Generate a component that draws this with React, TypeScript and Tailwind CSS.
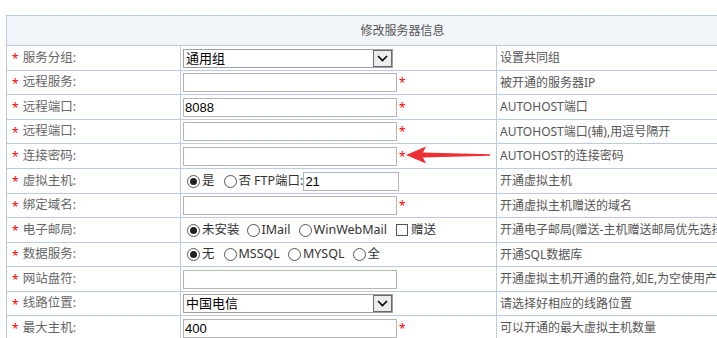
import React from "react";

const FONT = { fontFamily: '"Noto Sans", "Noto Sans CJK SC", sans-serif' };
const MONO = { fontFamily: '"Liberation Sans", "Noto Sans CJK SC", sans-serif' };

function Star() {
  return <span className="text-[#ff0000] text-[12px] leading-none">*</span>;
}

function TextInput({ value = "", w = "w-[214px]" }: { value?: string; w?: string }) {
  return (
    <div
      className={`${w} h-[19px] border border-[#b4b4b4] bg-white text-[13px] text-black leading-[17px] pl-[1px] whitespace-nowrap`}
      style={MONO}
    >
      {value}
    </div>
  );
}

function Select({ value, w }: { value: string; w: string }) {
  return (
    <div className={`${w} h-[19px] border border-[#a0a0a0] bg-white flex items-stretch`}>
      <div className="flex-1 text-[13px] text-black leading-[17px] pl-[2px]" style={MONO}>
        {value}
      </div>
      <div className="w-[19px] border border-[#6b6b6b] bg-[#ececec] flex items-center justify-center">
        <svg width="11" height="7" viewBox="0 0 11 7">
          <path d="M1 1 L5.5 5.5 L10 1" stroke="#000" strokeWidth="1.6" fill="none" />
        </svg>
      </div>
    </div>
  );
}

function Radio({ checked = false }: { checked?: boolean }) {
  return (
    <span className="inline-flex w-[13px] h-[13px] rounded-full border border-[#555] bg-white items-center justify-center shrink-0">
      {checked && <span className="w-[7px] h-[7px] rounded-full bg-[#222]" />}
    </span>
  );
}

function Opt({ checked, label, mr }: { checked?: boolean; label: string; mr: string }) {
  return (
    <span className={`inline-flex items-center ${mr}`}>
      <Radio checked={checked} />
      <span className="ml-[2px] text-[12.5px] text-[#333]" style={FONT}>
        {label}
      </span>
    </span>
  );
}

type Row = { label: string; h: string; field: React.ReactNode; desc: string };

const inputStar = (v = "") => (
  <div className="flex items-center">
    <TextInput value={v} />
    <span className="ml-[2px] -mt-[3px]">
      <Star />
    </span>
  </div>
);

const rows: Row[] = [
  { label: "服务分组:", h: "h-[25px]", field: <Select value="通用组" w="w-[210px]" />, desc: "设置共同组" },
  { label: "远程服务:", h: "h-[24px]", field: inputStar(), desc: "被开通的服务器IP" },
  { label: "远程端口:", h: "h-[25px]", field: inputStar("8088"), desc: "AUTOHOST端口" },
  { label: "远程端口:", h: "h-[24px]", field: inputStar(), desc: "AUTOHOST端口(辅),用逗号隔开" },
  { label: "连接密码:", h: "h-[25px]", field: inputStar(), desc: "AUTOHOST的连接密码" },
  {
    label: "虚拟主机:",
    h: "h-[25px]",
    field: (
      <div className="flex items-center pl-[4px]">
        <Opt checked label="是" mr="mr-[9px]" />
        <Opt label="否" mr="mr-[3px]" />
        <span className="text-[12.5px] text-[#333]" style={FONT}>FTP端口:</span>
        <TextInput value="21" w="w-[96px]" />
      </div>
    ),
    desc: "开通虚拟主机",
  },
  { label: "绑定域名:", h: "h-[24px]", field: inputStar(), desc: "开通虚拟主机赠送的域名" },
  {
    label: "电子邮局:",
    h: "h-[25px]",
    field: (
      <div className="flex items-center pl-[4px]">
        <Opt checked label="未安装" mr="mr-[7px]" />
        <Opt label="IMail" mr="mr-[8px]" />
        <Opt label="WinWebMail" mr="mr-[9px]" />
        <span className="w-[12px] h-[12px] border border-[#555] bg-white" />
        <span className="ml-[3px] text-[12.5px] text-[#333]" style={FONT}>赠送</span>
      </div>
    ),
    desc: "开通电子邮局(赠送-主机赠送邮局优先选择",
  },
  {
    label: "数据服务:",
    h: "h-[24px]",
    field: (
      <div className="flex items-center pl-[4px]">
        <Opt checked label="无" mr="mr-[9px]" />
        <Opt label="MSSQL" mr="mr-[8px]" />
        <Opt label="MYSQL" mr="mr-[8px]" />
        <Opt label="全" mr="mr-[0px]" />
      </div>
    ),
    desc: "开通SQL数据库",
  },
  { label: "网站盘符:", h: "h-[25px]", field: <TextInput />, desc: "开通虚拟主机开通的盘符,如E,为空使用产品" },
  { label: "线路位置:", h: "h-[24px]", field: <Select value="中国电信" w="w-[210px]" />, desc: "请选择好相应的线路位置" },
  { label: "最大主机:", h: "h-[25px]", field: inputStar("400"), desc: "可以开通的最大虚拟主机数量" },
];

export default function App() {
  return (
    <div className="relative w-[717px] h-[338px] overflow-hidden bg-white" style={FONT}>
      <div className="pt-[15px] pl-[6px]">
        <div className="w-[793px] border-l border-t border-[#b8cce4]">
          <div className="h-[30px] border-b border-r border-[#b8cce4] bg-[#f1f5fa] flex items-center justify-center text-[12px] text-[#555]">
            修改服务器信息
          </div>
          {rows.map((r, i) => (
            <div key={i} className={`${r.h} flex border-b border-[#b8cce4]`}>
              <div className="w-[174px] border-r border-[#b8cce4] flex items-center pl-[5px] whitespace-nowrap">
                <span className="-mt-[2px]">
                  <Star />
                </span>
                <span className="ml-[4px] text-[12.5px] text-[#666]">{r.label}</span>
              </div>
              <div className="w-[316px] border-r border-[#b8cce4] flex items-center pl-[2px]">{r.field}</div>
              <div className="flex-1 flex items-center pl-[3px] text-[12px] text-[#555] whitespace-nowrap">{r.desc}</div>
            </div>
          ))}
        </div>
      </div>
      <svg className="absolute left-[405px] top-[146px]" width="86" height="18" viewBox="0 0 86 18">
        <path d="M1 9 L21 0.5 L18 6.5 L85 8.2 L85 9.8 L18 11.5 L21 17.5 Z" fill="#ec2f33" />
      </svg>
    </div>
  );
}
